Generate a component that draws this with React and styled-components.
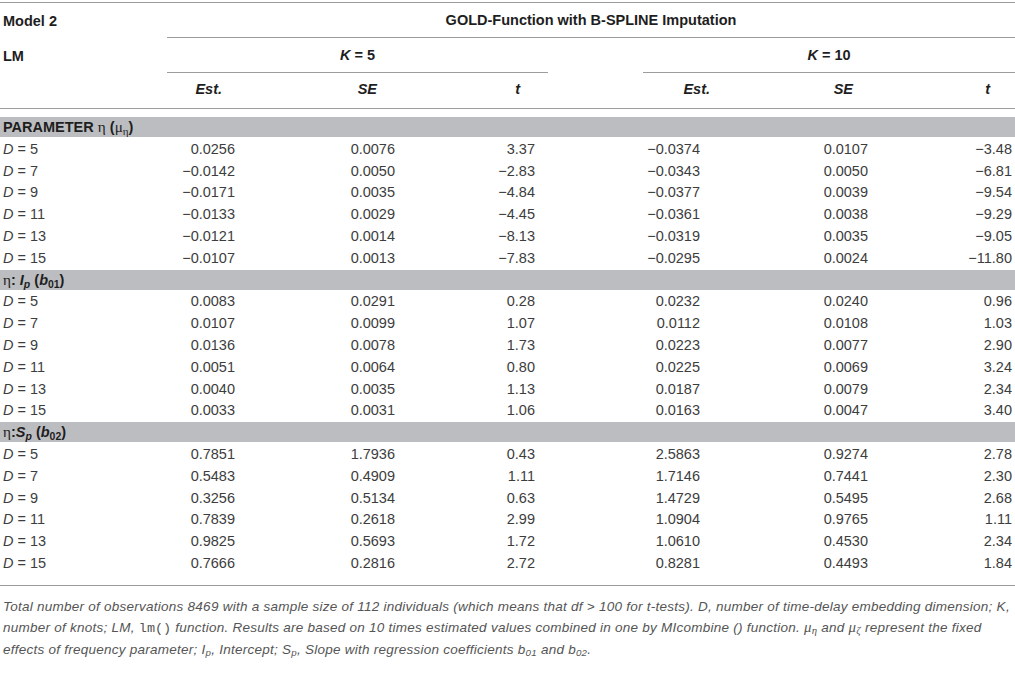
import React from 'react';
import styled, { createGlobalStyle } from 'styled-components';

const GlobalStyle = createGlobalStyle`
  html, body {
    margin: 0;
    padding: 0;
    background: #ffffff;
  }
  body {
    font-family: "Liberation Sans", Arial, Helvetica, sans-serif;
    color: #3d3d3d;
  }
`;

const MINUS = '\u2212';

const COLS = [
  { col: 2, pad: 13, headPad: 26, head: 'Est.' },
  { col: 3, pad: 5, headPad: 23, head: 'SE' },
  { col: 4, pad: 13, headPad: 28, head: 't' },
  { col: 6, pad: 15, headPad: 5, head: 'Est.' },
  { col: 7, pad: 5, headPad: 20, head: 'SE' },
  { col: 8, pad: 3, headPad: 25, head: 't' },
];

const m = (s) => s.replace('-', MINUS);

const SECTIONS = [
  {
    id: 'param',
    rows: [
      ['5', '0.0256', '0.0076', '3.37', '-0.0374', '0.0107', '-3.48'],
      ['7', '-0.0142', '0.0050', '-2.83', '-0.0343', '0.0050', '-6.81'],
      ['9', '-0.0171', '0.0035', '-4.84', '-0.0377', '0.0039', '-9.54'],
      ['11', '-0.0133', '0.0029', '-4.45', '-0.0361', '0.0038', '-9.29'],
      ['13', '-0.0121', '0.0014', '-8.13', '-0.0319', '0.0035', '-9.05'],
      ['15', '-0.0107', '0.0013', '-7.83', '-0.0295', '0.0024', '-11.80'],
    ],
  },
  {
    id: 'ip',
    rows: [
      ['5', '0.0083', '0.0291', '0.28', '0.0232', '0.0240', '0.96'],
      ['7', '0.0107', '0.0099', '1.07', '0.0112', '0.0108', '1.03'],
      ['9', '0.0136', '0.0078', '1.73', '0.0223', '0.0077', '2.90'],
      ['11', '0.0051', '0.0064', '0.80', '0.0225', '0.0069', '3.24'],
      ['13', '0.0040', '0.0035', '1.13', '0.0187', '0.0079', '2.34'],
      ['15', '0.0033', '0.0031', '1.06', '0.0163', '0.0047', '3.40'],
    ],
  },
  {
    id: 'sp',
    rows: [
      ['5', '0.7851', '1.7936', '0.43', '2.5863', '0.9274', '2.78'],
      ['7', '0.5483', '0.4909', '1.11', '1.7146', '0.7441', '2.30'],
      ['9', '0.3256', '0.5134', '0.63', '1.4729', '0.5495', '2.68'],
      ['11', '0.7839', '0.2618', '2.99', '1.0904', '0.9765', '1.11'],
      ['13', '0.9825', '0.5693', '1.72', '1.0610', '0.4530', '2.34'],
      ['15', '0.7666', '0.2816', '2.72', '0.8281', '0.4493', '1.84'],
    ],
  },
];

function SectionTitle({ id }) {
  if (id === 'param') {
    return (
      <>
        PARAMETER <Sym>η</Sym> (<Sym>μ</Sym>
        <Sub>
          <Sym>η</Sym>
        </Sub>
        )
      </>
    );
  }
  if (id === 'ip') {
    return (
      <>
        <Sym>η</Sym>: <i>I</i>
        <Sub>
          <i>p</i>
        </Sub>{' '}
        (<i>b</i>
        <Sub>01</Sub>)
      </>
    );
  }
  return (
    <>
      <Sym>η</Sym>:<i>S</i>
      <Sub>
        <i>p</i>
      </Sub>{' '}
      (<i>b</i>
      <Sub>02</Sub>)
    </>
  );
}

function App() {
  return (
    <Page>
      <GlobalStyle />
      <Head>
        <HeadLabel $col={1}>Model 2</HeadLabel>
        <Spanner $col="2 / 9">GOLD-Function with B-SPLINE Imputation</Spanner>

        <HeadLabel $col={1}>LM</HeadLabel>
        <Spanner $col="2 / 5">
          <i>K</i> = 5
        </Spanner>
        <Spanner $col="6 / 9">
          <i>K</i> = 10
        </Spanner>

        {COLS.map((c, i) => (
          <ColHead key={i} $col={c.col} $pad={c.headPad}>
            {c.head}
          </ColHead>
        ))}
      </Head>

      <Body>
        {SECTIONS.map((s) => (
          <React.Fragment key={s.id}>
            <Band>
              <SectionTitle id={s.id} />
            </Band>
            {s.rows.map((r) => (
              <React.Fragment key={s.id + r[0]}>
                <RowLabel>
                  <i>D</i> = {r[0]}
                </RowLabel>
                {COLS.map((c, i) => (
                  <Num key={i} $col={c.col} $pad={c.pad}>
                    {m(r[i + 1])}
                  </Num>
                ))}
              </React.Fragment>
            ))}
          </React.Fragment>
        ))}
      </Body>

      <Rule />

      <Footnote>
        Total number of observations 8469 with a sample size of 112 individuals (which means that
        df &gt; 100 for t-tests). D, number of time-delay embedding dimension; K,
        <br />
        number of knots; LM, <Mono>lm()</Mono> function. Results are based on 10 times estimated
        values combined in one by MIcombine () function. <Math>μ</Math>
        <FSub>
          <Math>η</Math>
        </FSub>{' '}
        and <Math>μ</Math>
        <FSub>
          <Math>ζ</Math>
        </FSub>{' '}
        represent the fixed
        <br />
        effects of frequency parameter; I<FSub>p</FSub>, Intercept; S<FSub>p</FSub>, Slope with
        regression coefficients b<FSub>01</FSub> and b<FSub>02</FSub>.
      </Footnote>
    </Page>
  );
}

const gridCols = `
  display: grid;
  grid-template-columns: 167px 81px 152px 148px 95px 72px 158px 142px;
`;

const Page = styled.div`
  width: 1015px;
  padding-top: 2px;
`;

const Head = styled.div`
  ${gridCols}
  border-top: 1px solid #9c9c9c;
  border-bottom: 1px solid #9c9c9c;
  font-size: 14.5px;
  font-weight: bold;
  color: #1e1e1e;
`;

const HeadLabel = styled.div`
  grid-column: ${(p) => p.$col};
  height: 35px;
  line-height: 37px;
  padding-left: 3px;
  white-space: nowrap;
`;

const Spanner = styled.div`
  grid-column: ${(p) => p.$col};
  height: 35px;
  line-height: 34px;
  box-sizing: border-box;
  border-bottom: 1px solid #9c9c9c;
  text-align: center;
  white-space: nowrap;
`;

const ColHead = styled.div`
  grid-column: ${(p) => p.$col};
  height: 35px;
  line-height: 32px;
  text-align: right;
  padding-right: ${(p) => p.$pad}px;
  font-style: italic;
`;

const Body = styled.div`
  ${gridCols}
  margin-top: 8px;
  font-size: 14.5px;
`;

const Band = styled.div`
  grid-column: 1 / -1;
  height: 20px;
  line-height: 20px;
  margin-bottom: 1.8px;
  background: #bcbdc0;
  padding-left: 3px;
  font-size: 14.5px;
  font-weight: bold;
  color: #1e1e1e;
  white-space: nowrap;
`;

const RowLabel = styled.div`
  grid-column: 1;
  height: 21.8px;
  line-height: 21.8px;
  padding-left: 3px;
  white-space: nowrap;
`;

const Num = styled.div`
  grid-column: ${(p) => p.$col};
  height: 21.8px;
  line-height: 21.8px;
  text-align: right;
  padding-right: ${(p) => p.$pad}px;
  white-space: nowrap;
`;

const Sym = styled.span`
  font-family: "Liberation Serif", "Times New Roman", serif;
  font-weight: normal;
  font-style: normal;
  font-size: 1.05em;
`;

const Sub = styled.sub`
  font-size: 0.72em;
  line-height: 0;
  vertical-align: -0.3em;
`;

const Rule = styled.div`
  margin-top: 10px;
  height: 1px;
  background: #9c9c9c;
`;

const Footnote = styled.p`
  margin: 10px 0 0;
  padding: 0 0 0 3px;
  font-size: 13.5px;
  letter-spacing: 0.25px;
  line-height: 21px;
  font-style: italic;
  color: #555555;
  white-space: nowrap;
`;

const Mono = styled.code`
  font-family: "Liberation Mono", "Courier New", monospace;
  font-style: normal;
  font-size: 13.5px;
  letter-spacing: 0;
`;

const Math = styled.span`
  font-family: "Liberation Serif", "Times New Roman", serif;
  font-style: italic;
  font-size: 1.1em;
`;

const FSub = styled.sub`
  font-size: 0.72em;
  line-height: 0;
  vertical-align: -0.25em;
`;

export default App;
